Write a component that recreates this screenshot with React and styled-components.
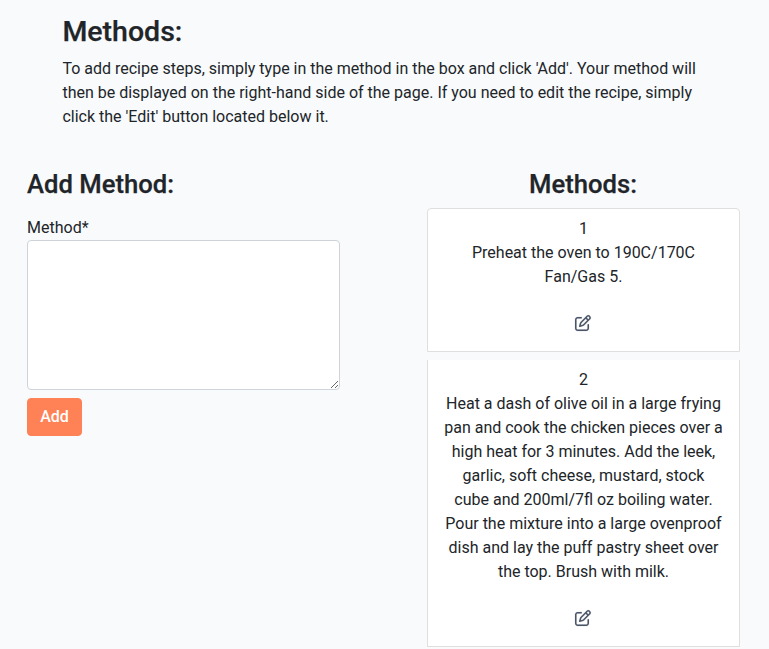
import React from "react";
import styled, { createGlobalStyle } from "styled-components";
import { FaRegPenToSquare } from "react-icons/fa6";

const Global = createGlobalStyle`
  *, *::before, *::after { box-sizing: border-box; }
  html { overflow: hidden; }
  body {
    margin: 0;
    background: #f8fafc;
    color: #212529;
    font-family: Roboto, sans-serif;
    font-size: 16px;
    line-height: 24px;
  }
`;

const Page = styled.main`
  height: 649px;
  padding: 15px 29px 0 27px;
  overflow: hidden;
`;

const Intro = styled.header`
  width: 650px;
  margin: 0 0 40px 35.4px;
`;

const Title = styled.h1`
  margin: 0 0 8px;
  font-size: 28.5px;
  font-weight: 500;
  line-height: 34px;
  -webkit-text-stroke: 0.25px currentColor;
`;

const Text = styled.p`
  margin: 0;
`;

const Columns = styled.div`
  display: grid;
  grid-template-columns: 313px 313px;
  justify-content: space-between;
  align-items: start;
`;

const Heading = styled.h2`
  margin: 0 0 8px;
  padding-right: ${(p) => (p.$centered ? "1px" : "0")};
  font-size: 25.65px;
  font-weight: 500;
  line-height: 31px;
  text-align: ${(p) => (p.$centered ? "center" : "left")};
  -webkit-text-stroke: 0.25px currentColor;
`;

const Form = styled.form`
  display: flex;
  flex-direction: column;
  align-items: flex-start;
`;

const Label = styled.label`
  margin: 8px 0 0;
`;

const Field = styled.textarea`
  display: block;
  width: 100%;
  height: 150px;
  border: 1px solid #ced4da;
  border-radius: 4px;
  background: #fff;
  padding: 6px 12px;
  font: inherit;
`;

const Button = styled.button`
  width: 55px;
  height: 38px;
  margin-top: 8px;
  padding: 6px 0;
  border: 1px solid #ff8256;
  border-radius: 4px;
  background: #ff8256;
  color: #fff;
  font: inherit;
  font-weight: 500;
`;

const Steps = styled.div`
  display: flex;
  flex-direction: column;
  gap: 8px;
`;

const Step = styled.article`
  padding: 8px 16px 20px;
  border: 1px solid #dfdfdf;
  border-top-width: ${(p) => (p.$first ? "1px" : "0")};
  border-radius: ${(p) => (p.$first ? "4px 4px 0 0" : "0")};
  background: #fff;
  text-align: center;
`;

const Edit = styled.a`
  display: flex;
  justify-content: center;
  margin-top: 26px;
  padding-right: 1px;
  color: #4a5568;

  svg {
    overflow: visible;
    stroke-width: 4;
  }
`;

const steps = [
  "Preheat the oven to 190C/170C Fan/Gas 5.",
  "Heat a dash of olive oil in a large frying pan and cook the chicken pieces over a high heat for 3 minutes. Add the leek, garlic, soft cheese, mustard, stock cube and 200ml/7fl oz boiling water. Pour the mixture into a large ovenproof dish and lay the puff pastry sheet over the top. Brush with milk.",
];

export default function App() {
  return (
    <Page>
      <Global />
      <Intro>
        <Title>Methods:</Title>
        <Text>
          To add recipe steps, simply type in the method in the box and click 'Add'. Your method will
          then be displayed on the right-hand side of the page. If you need to edit the recipe, simply
          click the 'Edit' button located below it.
        </Text>
      </Intro>
      <Columns>
        <Form>
          <Heading>Add Method:</Heading>
          <Label htmlFor="method">Method*</Label>
          <Field id="method" />
          <Button type="button">Add</Button>
        </Form>
        <section>
          <Heading $centered>Methods:</Heading>
          <Steps>
            {steps.map((step, i) => (
              <Step key={i} $first={i === 0}>
                <Text>{i + 1}</Text>
                <Text>{step}</Text>
                <Edit aria-label="Edit"><FaRegPenToSquare size={16} /></Edit>
              </Step>
            ))}
          </Steps>
        </section>
      </Columns>
    </Page>
  );
}
